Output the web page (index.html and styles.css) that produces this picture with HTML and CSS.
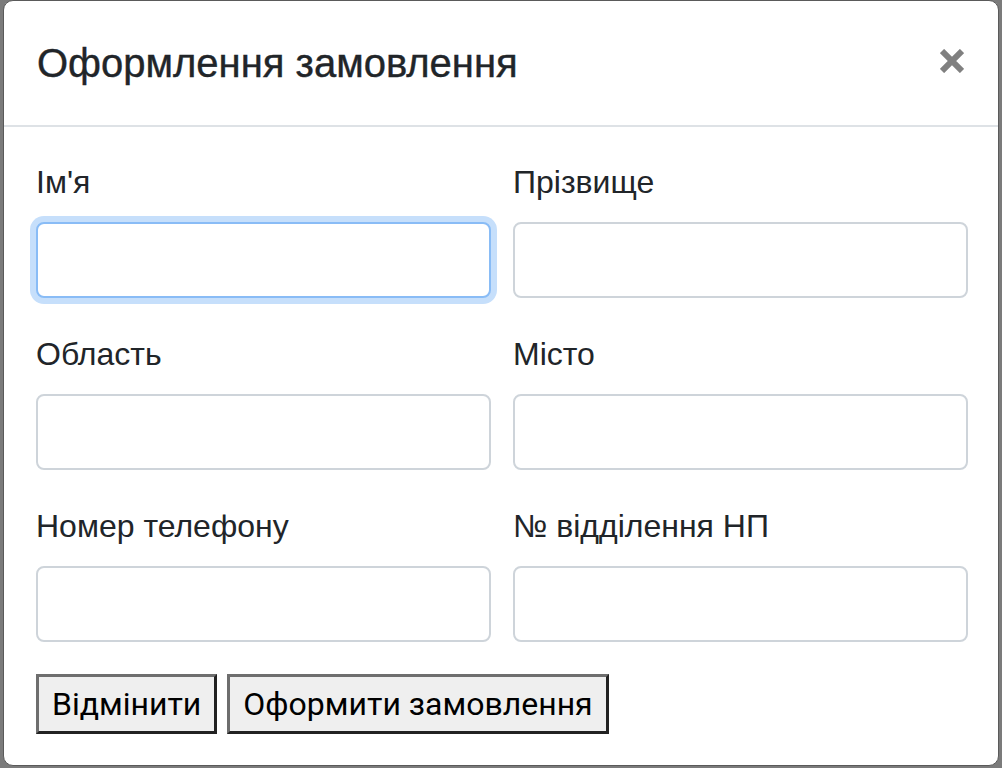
FILE: index.html
```html
<!DOCTYPE html>
<html lang="uk">
<head>
<meta charset="utf-8">
<title>Оформлення замовлення</title>
<link rel="stylesheet" href="styles.css">
</head>
<body>
<div class="modal">
  <div class="modal-header">
    <h5 class="modal-title">Оформлення замовлення</h5>
    <button class="close" type="button" aria-label="Close">
      <svg width="24" height="24" viewBox="0 0 24 24"><path d="M2 2 L22 22 M22 2 L2 22" stroke="#808080" stroke-width="6" stroke-linecap="butt" fill="none"/></svg>
    </button>
  </div>
  <div class="modal-body">
    <div class="form-grid">
      <div class="form-group">
        <label class="lbl">Ім'я</label>
        <input class="form-control focused" type="text">
      </div>
      <div class="form-group">
        <label class="lbl">Прізвище</label>
        <input class="form-control" type="text">
      </div>
      <div class="form-group">
        <label class="lbl">Область</label>
        <input class="form-control" type="text">
      </div>
      <div class="form-group">
        <label class="lbl">Місто</label>
        <input class="form-control" type="text">
      </div>
      <div class="form-group">
        <label class="lbl">Номер телефону</label>
        <input class="form-control" type="text">
      </div>
      <div class="form-group">
        <label class="lbl">№ відділення НП</label>
        <input class="form-control" type="text">
      </div>
    </div>
    <div class="actions">
      <button class="btn" type="button">Відмінити</button>
      <button class="btn" type="button">Оформити замовлення</button>
    </div>
  </div>
</div>
</body>
</html>
```

FILE: styles.css
```css
html, body {
  margin: 0;
  padding: 0;
  background: #7b7b7b;
  height: 768px;
  overflow: hidden;
}
body {
  font-family: "Liberation Sans", Arial, sans-serif;
  color: #212529;
}
.modal {
  margin-left: 3px;
  width: 994px;
  height: 764px;
  background: #fff;
  border: 1px solid #5a5a5a;
  border-radius: 10px;
  box-sizing: content-box;
}
.modal-header {
  display: flex;
  align-items: center;
  justify-content: space-between;
  padding: 32px 34px 32px 33px;
  border-bottom: 2px solid #dee2e6;
  height: 60px;
}
.modal-title {
  margin: 0;
  font-size: 40px;
  font-weight: 400;
  line-height: 60px;
  -webkit-text-stroke: 0.4px #212529;
}
.close {
  border: 0;
  background: none;
  padding: 0;
  width: 24px;
  height: 24px;
  display: block;
  margin-top: -5px;
}
.close svg { display: block; }
.modal-body {
  padding: 31px 30px 31px 32px;
}
.form-grid {
  display: grid;
  grid-template-columns: 1fr 1fr;
  column-gap: 22px;
}
.form-group {
  display: flex;
  flex-direction: column;
  margin-bottom: 32px;
}
.lbl {
  font-size: 32px;
  line-height: 48px;
  margin-bottom: 16px;
}
.form-control {
  box-sizing: border-box;
  height: 76px;
  border: 2px solid #ced4da;
  border-radius: 8px;
  background: #fff;
  outline: none;
  margin: 0;
  font-size: 32px;
}
.form-control.focused {
  border-color: #89bcf6;
  box-shadow: 0 0 0 6px #c6dffb;
}
.actions {
  display: flex;
  gap: 10px;
}
.btn {
  font-family: Roboto, "Liberation Sans", sans-serif;
  font-size: 32px;
  color: #000;
  background: #efefef;
  height: 60px;
  padding: 0 13px;
  border-style: solid;
  border-width: 3px;
  border-color: #6e6e6e #222 #222 #6e6e6e;
  margin: 0;
  line-height: 1;
}
```
